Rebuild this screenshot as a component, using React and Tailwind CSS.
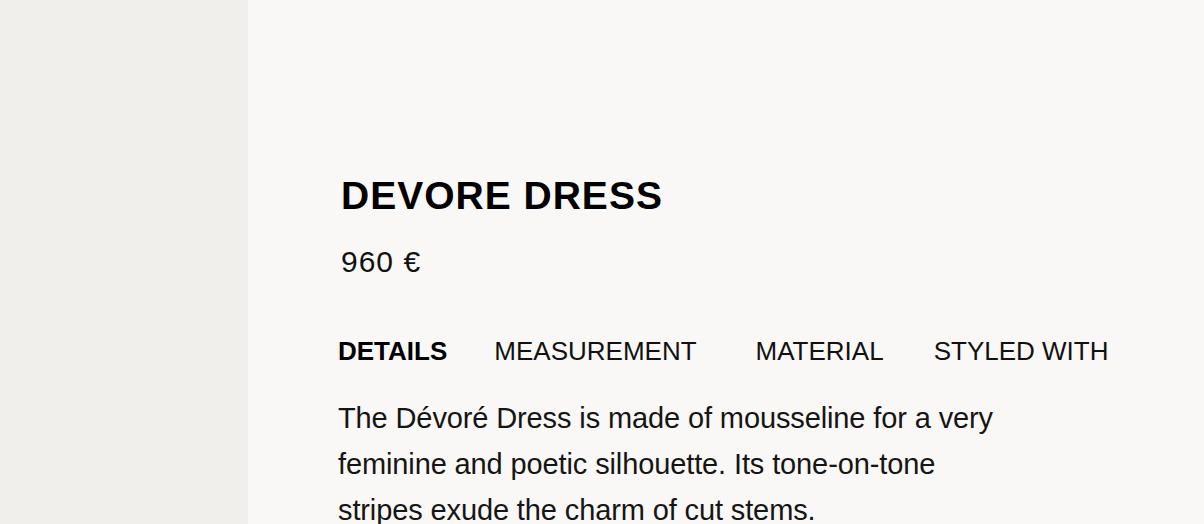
import React, { useState } from 'react';

const tabs = [
  { id: 'details', label: 'DETAILS', gap: '' },
  { id: 'measurement', label: 'MEASUREMENT', gap: 'ml-[47px]' },
  { id: 'material', label: 'MATERIAL', gap: 'ml-[59px]' },
  { id: 'styled', label: 'STYLED WITH', gap: 'ml-[50px]' },
];

export default function App() {
  const [activeTab, setActiveTab] = useState('details');

  return (
    <div className="flex h-[524px] w-full overflow-hidden font-['Liberation_Sans',Arial,sans-serif] text-[#111]">
      {/* Image column (empty panel) */}
      <aside className="w-[248px] shrink-0 bg-[#f0efeb]" />

      {/* Product info */}
      <main className="flex-1 bg-[#f9f8f6] pl-[90px] pt-[176px]">
        <h1 className="ml-[3px] text-[39px] leading-[39px] font-bold tracking-[1px] text-black">
          DEVORE DRESS
        </h1>
        <p className="ml-[3px] mt-[32px] text-[30px] leading-[30px] tracking-[1px]">960 €</p>

        <nav className="mt-[61px] flex items-center">
          {tabs.map((t) => (
            <button
              key={t.id}
              onClick={() => setActiveTab(t.id)}
              className={`${t.gap} text-[26px] leading-[26px] ${
                activeTab === t.id ? 'font-bold text-black' : 'font-normal text-[#111]'
              }`}
            >
              {t.label}
            </button>
          ))}
        </nav>

        <p className="mt-[31px] w-[680px] text-[29px] leading-[46px] tracking-[-0.12px] text-[#151515]">
          The Dévoré Dress is made of mousseline for a very feminine and poetic silhouette. Its
          tone-on-tone stripes exude the charm of cut stems.
        </p>
      </main>
    </div>
  );
}
